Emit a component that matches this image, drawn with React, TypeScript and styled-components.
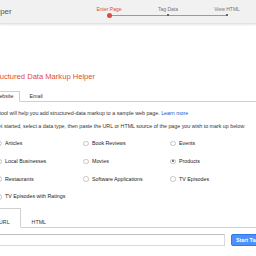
import React from 'react';
import styled, { createGlobalStyle } from 'styled-components';

const GlobalStyle = createGlobalStyle`
  html, body {
    margin: 0;
    padding: 0;
    background: #fff;
    overflow: hidden;
  }
  body {
    font-family: "Liberation Sans", Arial, sans-serif;
    color: #222;
  }
`;

const Header = styled.header`
  display: flex;
  height: 23px;
  background: #f1f1f1;
  border-bottom: 1px solid #e2e2e2;
  box-shadow: 0 1px 2px rgba(0, 0, 0, 0.1);
  overflow: hidden;
`;

const Brand = styled.div`
  flex: none;
  margin-left: -99px;
  width: 178.5px;
  font-size: 8px;
  line-height: 23px;
  color: #555;
  white-space: nowrap;
`;

const Steps = styled.ol`
  position: relative;
  display: flex;
  margin: 0;
  padding: 0;
  list-style: none;

  &::before {
    content: '';
    position: absolute;
    left: 29.5px;
    right: 29.5px;
    top: 14.5px;
    height: 1px;
    background: #9a9a9a;
  }
`;

const Step = styled.li<{ $active?: boolean }>`
  flex: none;
  width: 59px;
  display: flex;
  flex-direction: column;
  align-items: center;
  padding-top: 5.5px;
  font-size: 5px;
  line-height: 6px;
  white-space: nowrap;
  color: ${p => (p.$active ? '#dd4b39' : '#777')};
`;

const StepDot = styled.span<{ $active?: boolean }>`
  position: relative;
  z-index: 1;
  width: ${p => (p.$active ? '5px' : '2px')};
  height: ${p => (p.$active ? '5px' : '2px')};
  margin-top: ${p => (p.$active ? '1px' : '2.5px')};
  border-radius: ${p => (p.$active ? '50%' : '0')};
  background: ${p => (p.$active ? '#dd4b39' : '#666')};
`;

const Main = styled.main`
  margin-left: -12px;
  width: 290px;
  padding-top: 48px;
`;

const Title = styled.h1`
  margin: 0 0 0 2px;
  font-size: 7.6px;
  line-height: 10px;
  font-weight: normal;
  color: #dd4b39;
  white-space: nowrap;
`;

const TabBar = styled.div<{ $top: number; $gap: number }>`
  display: flex;
  gap: ${p => p.$gap}px;
  margin-top: ${p => p.$top}px;
  border-bottom: 1px solid #d0d0d0;
`;

const Tab = styled.div<{ $active?: boolean; $tall?: boolean }>`
  padding: ${p => (p.$tall ? '10px 10px 1px' : '0 5.5px')};
  margin-bottom: -1px;
  font-size: 5.3px;
  line-height: ${p => (p.$tall ? '7px' : '8.5px')};
  color: #333;
  white-space: nowrap;
  border: 1px solid ${p => (p.$active ? '#d0d0d0' : 'transparent')};
  border-bottom: 1px solid ${p => (p.$active ? '#fff' : 'transparent')};
  background: ${p => (p.$active ? '#fff' : 'transparent')};
`;

const Para = styled.p<{ $top: number }>`
  margin: ${p => p.$top}px 0 0;
  font-size: 5.3px;
  line-height: 7px;
  color: #333;
  white-space: nowrap;
`;

const LearnMore = styled.a`
  color: #1155cc;
  text-decoration: none;
`;

const TypeGrid = styled.div`
  display: grid;
  grid-template-columns: 87px 87px 87px;
  row-gap: 10.8px;
  margin-top: 10px;
`;

const TypeOption = styled.label`
  display: flex;
  align-items: center;
  gap: 3.5px;
  padding-left: 8px;
  font-size: 5.3px;
  line-height: 7px;
  color: #222;
  white-space: nowrap;
`;

const RadioMark = styled.span<{ $checked?: boolean }>`
  flex: none;
  display: flex;
  align-items: center;
  justify-content: center;
  box-sizing: border-box;
  width: 5.5px;
  height: 5.5px;
  border: 1px solid #c4c4c4;
  border-radius: 50%;
  background: #fff;

  &::after {
    content: '';
    width: 2px;
    height: 2px;
    border-radius: 50%;
    background: ${p => (p.$checked ? '#555' : 'transparent')};
  }
`;

const SubmitRow = styled.div`
  display: flex;
  gap: 6px;
  margin-top: 6px;
`;

const UrlInput = styled.input`
  flex: none;
  box-sizing: border-box;
  width: 237px;
  height: 12px;
  margin: 0;
  padding: 0 3px;
  font-family: inherit;
  font-size: 5.3px;
  border: 1px solid #d9d9d9;
  border-top-color: #c0c0c0;
  border-radius: 1px;
  outline: none;
`;

const StartButton = styled.button`
  flex: none;
  box-sizing: border-box;
  height: 12px;
  padding: 0 4px;
  font-family: inherit;
  font-size: 5.3px;
  font-weight: bold;
  color: #fff;
  background: #4d90fe;
  border: 1px solid #3079ed;
  border-radius: 2px;
  white-space: nowrap;
`;

const dataTypes = [
  { label: 'Articles' },
  { label: 'Book Reviews' },
  { label: 'Events' },
  { label: 'Local Businesses' },
  { label: 'Movies' },
  { label: 'Products', checked: true },
  { label: 'Restaurants' },
  { label: 'Software Applications' },
  { label: 'TV Episodes' },
  { label: 'TV Episodes with Ratings' },
];

const steps = ['Enter Page', 'Tag Data', 'View HTML'];

const App: React.FC = () => {
  return (
    <>
      <GlobalStyle />
      <Header>
        <Brand>Structured Data Markup Helper</Brand>
        <Steps>
          {steps.map((s, i) => (
            <Step key={s} $active={i === 0}>
              {s}
              <StepDot $active={i === 0} />
            </Step>
          ))}
        </Steps>
      </Header>
      <Main>
        <Title>Structured Data Markup Helper</Title>
        <TabBar $top={9} $gap={3}>
          <Tab $active>Website</Tab>
          <Tab>Email</Tab>
        </TabBar>
        <Para $top={8}>
          This tool will help you add structured-data markup to a sample web page.{' '}
          <LearnMore href="#">Learn more</LearnMore>
        </Para>
        <Para $top={6.5}>
          To get started, select a data type, then paste the URL or HTML source of the page you wish to mark up below:
        </Para>
        <TypeGrid>
          {dataTypes.map(t => (
            <TypeOption key={t.label}>
              <RadioMark $checked={t.checked} />
              {t.label}
            </TypeOption>
          ))}
        </TypeGrid>
        <TabBar $top={8} $gap={0}>
          <Tab $active $tall>URL</Tab>
          <Tab $tall>HTML</Tab>
        </TabBar>
        <SubmitRow>
          <UrlInput type="text" />
          <StartButton>Start Tagging</StartButton>
        </SubmitRow>
      </Main>
    </>
  );
};

export default App;
